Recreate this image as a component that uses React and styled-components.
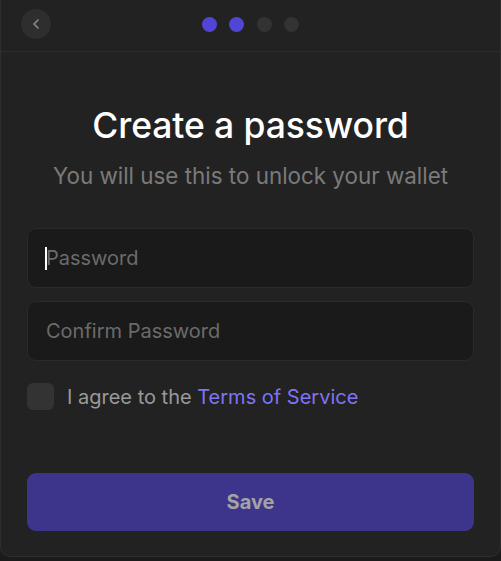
import React from "react";
import styled, { createGlobalStyle } from "styled-components";
import { ChevronLeft } from "lucide-react";

const GlobalStyle = createGlobalStyle`
  * { box-sizing: border-box; }
  body {
    margin: 0;
    background: #1b1b1b;
    font-family: Inter, "Noto Sans", sans-serif;
  }
`;

const Frame = styled.div`
  width: 501px;
  height: 557px;
  background: #222222;
  border: 1px solid #2e2e2e;
  border-top: none;
  border-radius: 0 0 10px 10px;
  display: flex;
  flex-direction: column;
`;

const Header = styled.div`
  height: 52px;
  border-bottom: 1px solid #2c2c2c;
  display: grid;
  grid-template-columns: 60px 1fr 60px;
  align-items: center;
  padding-left: 20px;
`;

const BackButton = styled.button`
  width: 30px;
  height: 30px;
  border-radius: 50%;
  border: none;
  background: #2e2e2e;
  color: #8a8a8a;
  display: flex;
  align-items: center;
  justify-content: center;
  padding: 0;
  margin-top: -3px;
`;

const Dots = styled.div`
  display: flex;
  justify-content: center;
  gap: 12.5px;
  margin-left: -20px;
  margin-top: -3px;
`;

const Dot = styled.span`
  width: 15px;
  height: 15px;
  border-radius: 50%;
  background: ${(p) => (p.$active ? "#5145d6" : "#333333")};
`;

const Body = styled.div`
  flex: 1;
  display: flex;
  flex-direction: column;
  padding: 0 26px 25px 26px;
`;

const Title = styled.h1`
  margin: 52px 0 0;
  text-align: center;
  color: #ffffff;
  font-size: 35.5px;
  line-height: 44px;
  font-weight: 500;
  letter-spacing: -0.1px;
`;

const Subtitle = styled.p`
  margin: 14px 0 0;
  text-align: center;
  color: #7a7a7a;
  font-size: 22.4px;
  line-height: 28px;
`;

const Fields = styled.div`
  margin-top: 38px;
  display: flex;
  flex-direction: column;
  gap: 13px;
`;

const Field = styled.div`
  position: relative;
`;

const Input = styled.input`
  width: 100%;
  height: 60px;
  background: #1a1a1a;
  border: 1px solid #2a2a2a;
  border-radius: 9px;
  padding: 0 18px;
  color: #ddd;
  font-family: Inter, sans-serif;
  font-size: 20px;
  outline: none;
  &::placeholder {
    color: #6b6b6b;
  }
`;

const Caret = styled.span`
  position: absolute;
  left: 18px;
  top: 19px;
  width: 1.5px;
  height: 23px;
  background: #ffffff;
`;

const AgreeRow = styled.label`
  margin-top: 22px;
  display: flex;
  align-items: center;
  gap: 13px;
  color: #9a9a9a;
  font-size: 20px;
`;

const Box = styled.span`
  width: 27px;
  height: 27px;
  border-radius: 6px;
  background: #333333;
`;

const Link = styled.a`
  color: #7f74f5;
  text-decoration: none;
`;

const SaveButton = styled.button`
  margin-top: auto;
  height: 58px;
  border: none;
  border-radius: 9px;
  background: #3c358b;
  color: #a3a3a3;
  font-family: Inter, sans-serif;
  font-size: 20px;
  font-weight: 700;
`;

const App = () => {
  return (
    <>
      <GlobalStyle />
      <Frame>
        <Header>
          <BackButton>
            <ChevronLeft size={16} strokeWidth={2.5} />
          </BackButton>
          <Dots>
            <Dot $active />
            <Dot $active />
            <Dot />
            <Dot />
          </Dots>
        </Header>
        <Body>
          <Title>Create a password</Title>
          <Subtitle>You will use this to unlock your wallet</Subtitle>
          <Fields>
            <Field>
              <Input type="password" placeholder="Password" />
              <Caret />
            </Field>
            <Field>
              <Input type="password" placeholder="Confirm Password" />
            </Field>
          </Fields>
          <AgreeRow>
            <Box />
            <span>
              I agree to the <Link href="#">Terms of Service</Link>
            </span>
          </AgreeRow>
          <SaveButton>Save</SaveButton>
        </Body>
      </Frame>
    </>
  );
};

export default App;
